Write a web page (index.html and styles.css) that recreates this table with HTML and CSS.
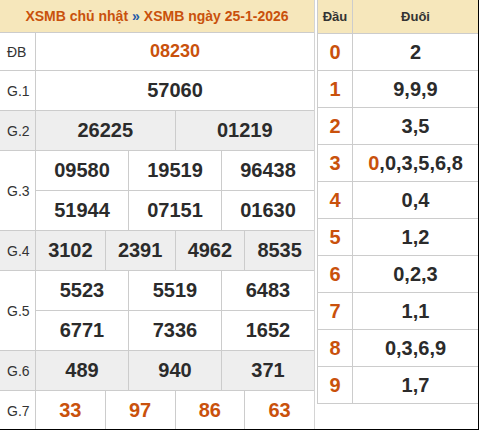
FILE: index.html
```html
<!DOCTYPE html>
<html lang="vi">
<head>
<meta charset="utf-8">
<title>XSMB ngày 25-1-2026</title>
<link rel="stylesheet" href="styles.css">
</head>
<body>
<div class="frame">
  <div class="kq">
    <div class="kq-head">XSMB chủ nhật <span class="sep">»</span> XSMB ngày 25-1-2026</div>
    <div class="row r-db">
      <div class="lbl">ĐB</div>
      <div class="vals"><div class="line"><div class="cell hot small">08230</div></div></div>
    </div>
    <div class="row">
      <div class="lbl">G.1</div>
      <div class="vals"><div class="line"><div class="cell">57060</div></div></div>
    </div>
    <div class="row alt">
      <div class="lbl">G.2</div>
      <div class="vals"><div class="line"><div class="cell">26225</div><div class="cell">01219</div></div></div>
    </div>
    <div class="row">
      <div class="lbl">G.3</div>
      <div class="vals">
        <div class="line"><div class="cell">09580</div><div class="cell">19519</div><div class="cell">96438</div></div>
        <div class="line"><div class="cell">51944</div><div class="cell">07151</div><div class="cell">01630</div></div>
      </div>
    </div>
    <div class="row alt">
      <div class="lbl">G.4</div>
      <div class="vals"><div class="line"><div class="cell">3102</div><div class="cell">2391</div><div class="cell">4962</div><div class="cell">8535</div></div></div>
    </div>
    <div class="row">
      <div class="lbl">G.5</div>
      <div class="vals">
        <div class="line"><div class="cell">5523</div><div class="cell">5519</div><div class="cell">6483</div></div>
        <div class="line"><div class="cell">6771</div><div class="cell">7336</div><div class="cell">1652</div></div>
      </div>
    </div>
    <div class="row alt">
      <div class="lbl">G.6</div>
      <div class="vals"><div class="line"><div class="cell">489</div><div class="cell">940</div><div class="cell">371</div></div></div>
    </div>
    <div class="row">
      <div class="lbl">G.7</div>
      <div class="vals"><div class="line"><div class="cell hot">33</div><div class="cell hot">97</div><div class="cell hot">86</div><div class="cell hot">63</div></div></div>
    </div>
  </div>

  <div class="dd">
    <div class="dd-row dd-head"><div class="dau">Đầu</div><div class="duoi">Đuôi</div></div>
    <div class="dd-row"><div class="dau">0</div><div class="duoi">2</div></div>
    <div class="dd-row"><div class="dau">1</div><div class="duoi">9,9,9</div></div>
    <div class="dd-row"><div class="dau">2</div><div class="duoi">3,5</div></div>
    <div class="dd-row"><div class="dau">3</div><div class="duoi"><span class="mark">0</span>,0,3,5,6,8</div></div>
    <div class="dd-row"><div class="dau">4</div><div class="duoi">0,4</div></div>
    <div class="dd-row"><div class="dau">5</div><div class="duoi">1,2</div></div>
    <div class="dd-row"><div class="dau">6</div><div class="duoi">0,2,3</div></div>
    <div class="dd-row"><div class="dau">7</div><div class="duoi">1,1</div></div>
    <div class="dd-row"><div class="dau">8</div><div class="duoi">0,3,6,9</div></div>
    <div class="dd-row"><div class="dau">9</div><div class="duoi">1,7</div></div>
  </div>
</div>
</body>
</html>
```

FILE: styles.css
```css
* { box-sizing: border-box; }
html, body { margin: 0; padding: 0; background: #fff; }
body { font-family: "Liberation Sans", Arial, sans-serif; color: #333; }

.frame {
  width: 479px;
  height: 430px;
  border-right: 1px solid #000;
  border-bottom: 1px solid #000;
  overflow: hidden;
  display: flex;
  align-items: flex-start;
  gap: 2px;
}

/* results table */
.kq {
  width: 315px;
  flex: none;
  border-right: 1px solid #d4d4d4;
}
.kq-head {
  height: 33px;
  background: #f6e7bb;
  border-bottom: 1px solid #ccc;
  display: flex;
  align-items: center;
  justify-content: center;
  color: #c9510c;
  font-weight: bold;
  font-size: 14px;
}
.kq-head .sep { color: #1e5aa8; margin: 0 4px; }

.row {
  display: flex;
  border-bottom: 1px solid #ccc;
}
.row.alt { background: #eeeeee; }
.lbl {
  width: 36px;
  flex: none;
  border-right: 1px solid #ccc;
  display: flex;
  align-items: center;
  padding-left: 7px;
  font-size: 14px;
  color: #333;
}
.vals {
  flex: 1;
  display: flex;
  flex-direction: column;
}
.line {
  display: flex;
  height: 39px;
}
.line + .line { border-top: 1px solid #ccc; height: 40px; }
.r-db .line { height: 37px; }
.cell {
  flex: 1 1 0;
  display: flex;
  align-items: center;
  justify-content: center;
  font-weight: bold;
  font-size: 20px;
  color: #2b2b2b;
}
.cell + .cell { border-left: 1px solid #ccc; }
.cell.hot { color: #c9510c; }
.cell.small { font-size: 18px; }

/* đầu đuôi table */
.dd {
  width: 161px;
  flex: none;
  border-left: 1px solid #ccc;
}
.dd-row {
  display: flex;
  height: 37px;
  border-bottom: 1px solid #ccc;
}
.dd-row.dd-head {
  height: 34px;
  background: #f6e7bb;
}
.dau {
  width: 35px;
  flex: none;
  border-right: 1px solid #ccc;
  display: flex;
  align-items: center;
  justify-content: center;
  font-weight: bold;
  font-size: 20px;
  color: #c9510c;
}
.duoi {
  flex: 1;
  display: flex;
  align-items: center;
  justify-content: center;
  font-weight: bold;
  font-size: 20px;
  color: #2b2b2b;
}
.dd-head .dau, .dd-head .duoi {
  font-size: 13px;
  color: #333;
}
.mark { color: #c9510c; }
```
